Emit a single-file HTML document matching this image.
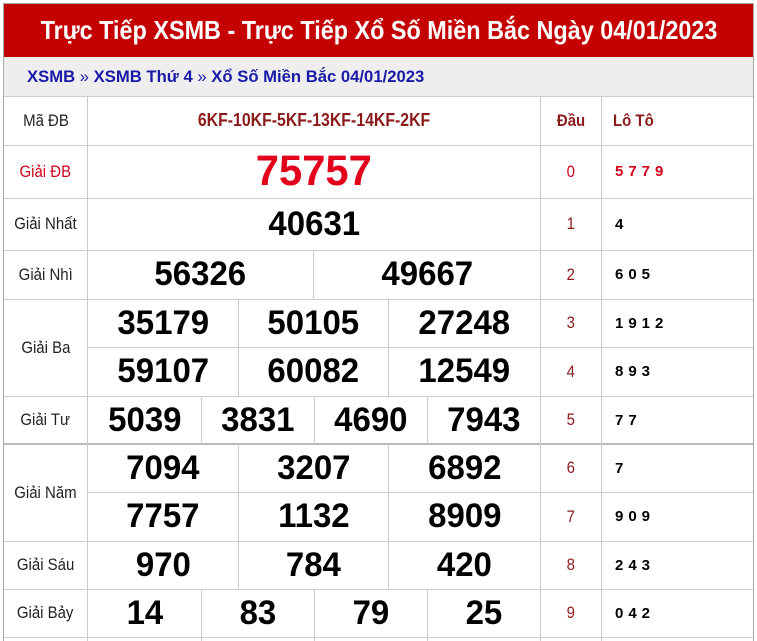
<!DOCTYPE html>
<html><head><meta charset="utf-8"><style>
*{margin:0;padding:0;box-sizing:border-box}
body{width:757px;height:641px;background:#fff;position:relative;overflow:hidden;font-family:"Liberation Sans",sans-serif}
.a{position:absolute;display:flex;align-items:center;justify-content:center;white-space:nowrap}
.s{display:inline-block;transform:scaleX(.88)}
.n{font-weight:bold;font-size:34px;color:#000}
.n .s{transform:scaleX(.97)}
.l{font-size:17px;color:#222}
.d{font-size:17px;color:#8b1a1a}
.t{font-weight:bold;font-size:15px;color:#000;justify-content:flex-start;padding-left:13px;letter-spacing:5px}
.h{position:absolute;height:1px;background:#ccc}
.v{position:absolute;width:1px;background:#ccc}
</style></head><body>
<div style="position:absolute;left:3px;top:3px;width:751px;height:638px;border:1px solid #aaa;border-bottom:none"></div>
<div class="a" style="left:4px;top:4px;width:749px;height:53px;background:#c40000;color:#fff;font-weight:bold;font-size:26px"><span class="s" style="transform:scaleX(.9)">Trực Tiếp XSMB - Trực Tiếp Xổ Số Miền Bắc Ngày 04/01/2023</span></div>
<div class="a" style="left:4px;top:57px;width:749px;height:39px;background:#eee;justify-content:flex-start;padding-left:23px;font-size:17px;color:#1a1aa8;font-weight:bold"><span class="s" style="transform-origin:left;transform:scaleX(.98)">XSMB <span style="font-weight:normal">»</span> XSMB Thứ 4 <span style="font-weight:normal">»</span> Xổ Số Miền Bắc 04/01/2023</span></div>

<div class="h" style="left:4px;top:96px;width:749px"></div>
<div class="h" style="left:4px;top:145px;width:749px"></div>
<div class="h" style="left:4px;top:198px;width:749px"></div>
<div class="h" style="left:4px;top:250px;width:749px"></div>
<div class="h" style="left:4px;top:299px;width:749px"></div>
<div class="h" style="left:87px;top:347px;width:666px"></div>
<div class="h" style="left:4px;top:396px;width:749px"></div>
<div class="h" style="left:4px;top:443px;width:749px;height:2px;background:#bbb"></div>
<div class="h" style="left:87px;top:492px;width:666px"></div>
<div class="h" style="left:4px;top:541px;width:749px"></div>
<div class="h" style="left:4px;top:589px;width:749px"></div>
<div class="h" style="left:4px;top:637px;width:749px"></div>
<div class="v" style="left:87px;top:96px;height:545px"></div>
<div class="v" style="left:540px;top:96px;height:545px"></div>
<div class="v" style="left:601px;top:96px;height:545px"></div>
<div class="v" style="left:313px;top:250px;height:49px"></div>
<div class="v" style="left:238px;top:299px;height:97px"></div>
<div class="v" style="left:388px;top:299px;height:97px"></div>
<div class="v" style="left:201px;top:396px;height:48px"></div>
<div class="v" style="left:314px;top:396px;height:48px"></div>
<div class="v" style="left:427px;top:396px;height:48px"></div>
<div class="v" style="left:238px;top:444px;height:145px"></div>
<div class="v" style="left:388px;top:444px;height:145px"></div>
<div class="v" style="left:201px;top:589px;height:52px"></div>
<div class="v" style="left:314px;top:589px;height:52px"></div>
<div class="v" style="left:427px;top:589px;height:52px"></div>

<div class="a l" style="left:4px;top:96px;width:83px;height:49px"><span class="s">Mã ĐB</span></div>
<div class="a" style="left:88px;top:96px;width:452px;height:49px;color:#8b1a1a;font-weight:bold;font-size:18px"><span class="s">6KF-10KF-5KF-13KF-14KF-2KF</span></div>
<div class="a l" style="left:541px;top:96px;width:60px;height:49px;font-weight:bold;color:#8b1a1a"><span class="s">Đầu</span></div>
<div class="a l" style="left:602px;top:96px;width:151px;height:49px;justify-content:flex-start;padding-left:11px;font-weight:bold;color:#8b1a1a"><span class="s" style="transform-origin:left">Lô Tô</span></div>

<div class="a l" style="left:4px;top:145px;width:83px;height:53px;color:#d0021b"><span class="s">Giải ĐB</span></div>
<div class="a n" style="left:88px;top:145px;width:452px;height:53px;font-size:43px;color:#e3001b"><span class="s">75757</span></div>
<div class="a l" style="left:4px;top:198px;width:83px;height:52px"><span class="s">Giải Nhất</span></div>
<div class="a n" style="left:88px;top:198px;width:452px;height:52px"><span class="s">40631</span></div>
<div class="a l" style="left:4px;top:250px;width:83px;height:49px"><span class="s">Giải Nhì</span></div>
<div class="a n" style="left:88px;top:250px;width:225px;height:49px"><span class="s">56326</span></div>
<div class="a n" style="left:314px;top:250px;width:226px;height:49px"><span class="s">49667</span></div>
<div class="a l" style="left:4px;top:299px;width:83px;height:97px"><span class="s">Giải Ba</span></div>
<div class="a n" style="left:88px;top:299px;width:150px;height:48px"><span class="s">35179</span></div>
<div class="a n" style="left:239px;top:299px;width:149px;height:48px"><span class="s">50105</span></div>
<div class="a n" style="left:389px;top:299px;width:151px;height:48px"><span class="s">27248</span></div>
<div class="a n" style="left:88px;top:347px;width:150px;height:49px"><span class="s">59107</span></div>
<div class="a n" style="left:239px;top:347px;width:149px;height:49px"><span class="s">60082</span></div>
<div class="a n" style="left:389px;top:347px;width:151px;height:49px"><span class="s">12549</span></div>
<div class="a l" style="left:4px;top:396px;width:83px;height:48px"><span class="s">Giải Tư</span></div>
<div class="a n" style="left:88px;top:396px;width:113px;height:48px"><span class="s">5039</span></div>
<div class="a n" style="left:202px;top:396px;width:112px;height:48px"><span class="s">3831</span></div>
<div class="a n" style="left:315px;top:396px;width:112px;height:48px"><span class="s">4690</span></div>
<div class="a n" style="left:428px;top:396px;width:112px;height:48px"><span class="s">7943</span></div>
<div class="a l" style="left:4px;top:444px;width:83px;height:97px"><span class="s">Giải Năm</span></div>
<div class="a n" style="left:88px;top:444px;width:150px;height:48px"><span class="s">7094</span></div>
<div class="a n" style="left:239px;top:444px;width:149px;height:48px"><span class="s">3207</span></div>
<div class="a n" style="left:389px;top:444px;width:151px;height:48px"><span class="s">6892</span></div>
<div class="a n" style="left:88px;top:492px;width:150px;height:49px"><span class="s">7757</span></div>
<div class="a n" style="left:239px;top:492px;width:149px;height:49px"><span class="s">1132</span></div>
<div class="a n" style="left:389px;top:492px;width:151px;height:49px"><span class="s">8909</span></div>
<div class="a l" style="left:4px;top:541px;width:83px;height:48px"><span class="s">Giải Sáu</span></div>
<div class="a n" style="left:88px;top:541px;width:150px;height:48px"><span class="s">970</span></div>
<div class="a n" style="left:239px;top:541px;width:149px;height:48px"><span class="s">784</span></div>
<div class="a n" style="left:389px;top:541px;width:151px;height:48px"><span class="s">420</span></div>
<div class="a l" style="left:4px;top:589px;width:83px;height:48px"><span class="s">Giải Bảy</span></div>
<div class="a n" style="left:88px;top:589px;width:113px;height:48px"><span class="s">14</span></div>
<div class="a n" style="left:202px;top:589px;width:112px;height:48px"><span class="s">83</span></div>
<div class="a n" style="left:315px;top:589px;width:112px;height:48px"><span class="s">79</span></div>
<div class="a n" style="left:428px;top:589px;width:112px;height:48px"><span class="s">25</span></div>

<div class="a d" style="left:541px;top:145px;width:60px;height:53px;color:#d0021b"><span class="s">0</span></div>
<div class="a t" style="left:602px;top:145px;width:151px;height:53px;color:#d0021b">5779</div>
<div class="a d" style="left:541px;top:198px;width:60px;height:52px"><span class="s">1</span></div>
<div class="a t" style="left:602px;top:198px;width:151px;height:52px">4</div>
<div class="a d" style="left:541px;top:250px;width:60px;height:49px"><span class="s">2</span></div>
<div class="a t" style="left:602px;top:250px;width:151px;height:49px">605</div>
<div class="a d" style="left:541px;top:299px;width:60px;height:48px"><span class="s">3</span></div>
<div class="a t" style="left:602px;top:299px;width:151px;height:48px">1912</div>
<div class="a d" style="left:541px;top:347px;width:60px;height:49px"><span class="s">4</span></div>
<div class="a t" style="left:602px;top:347px;width:151px;height:49px">893</div>
<div class="a d" style="left:541px;top:396px;width:60px;height:48px"><span class="s">5</span></div>
<div class="a t" style="left:602px;top:396px;width:151px;height:48px">77</div>
<div class="a d" style="left:541px;top:444px;width:60px;height:48px"><span class="s">6</span></div>
<div class="a t" style="left:602px;top:444px;width:151px;height:48px">7</div>
<div class="a d" style="left:541px;top:492px;width:60px;height:49px"><span class="s">7</span></div>
<div class="a t" style="left:602px;top:492px;width:151px;height:49px">909</div>
<div class="a d" style="left:541px;top:541px;width:60px;height:48px"><span class="s">8</span></div>
<div class="a t" style="left:602px;top:541px;width:151px;height:48px">243</div>
<div class="a d" style="left:541px;top:589px;width:60px;height:48px"><span class="s">9</span></div>
<div class="a t" style="left:602px;top:589px;width:151px;height:48px">042</div>
</body></html>
